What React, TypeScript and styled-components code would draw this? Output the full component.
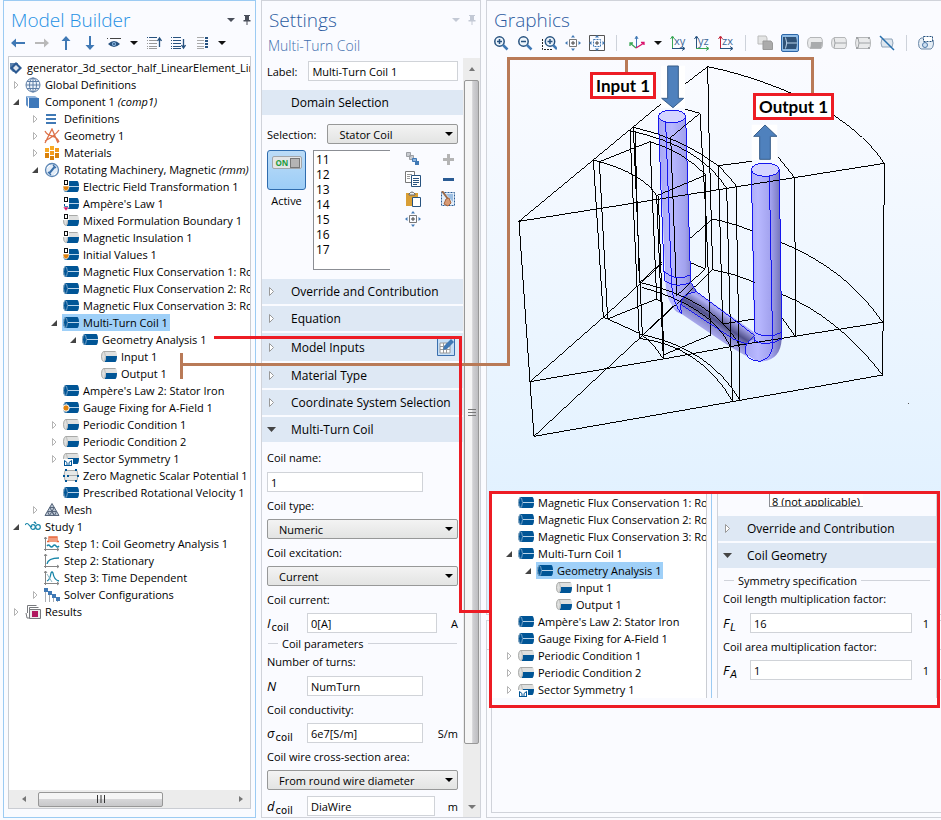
import React from "react";
import styled, { createGlobalStyle, css } from "styled-components";

const GlobalStyle = createGlobalStyle`
  *, *::before, *::after { box-sizing: border-box; }
  body {
    margin: 0;
    background: #fafbff;
    color: #000;
    font-family: "Open Sans", "Noto Sans", sans-serif;
    font-size: 11px;
    overflow: hidden;
  }
  button, input, select { font: inherit; color: inherit; margin: 0; }
  ul { list-style: none; margin: 0; padding: 0; }
`;

/* ---------- shell ---------- */

const Page = styled.div`
  position: relative;
  display: grid;
  grid-template-columns: 253px 220px minmax(0, 1fr);
  grid-template-rows: minmax(0, 1fr);
  gap: 5px;
  height: 100vh;
  padding: 0 0 2px 3px;
`;

const Panel = styled.section<{ $active?: boolean }>`
  display: flex;
  flex-direction: column;
  min-width: 0;
  min-height: 0;
  overflow: hidden;
  background: #fafbff;
  border: 1px solid ${(p) => (p.$active ? "#9ccbf3" : "#d0d3da")};
`;

const TitleBar = styled.header<{ $dim?: boolean }>`
  display: flex;
  flex: none;
  align-items: center;
  gap: 8px;
  height: 34px;
  padding: 4px 4px 0 7px;
  color: ${(p) => (p.$dim ? "#c3c9d5" : "#4a4f5a")};
`;

const Title = styled.h1<{ $color: string }>`
  flex: 1;
  margin: 0;
  font-size: 19px;
  font-weight: 300;
  line-height: 28px;
  white-space: nowrap;
  color: ${(p) => p.$color};
`;

const PlainButton = styled.button`
  display: flex;
  flex: none;
  align-items: center;
  justify-content: center;
  padding: 0;
  border: 0;
  background: none;
`;

const Toolbar = styled.div`
  display: flex;
  flex: none;
  align-items: center;
  gap: 8px;
  height: 16px;
  padding: 0 6px;
`;

/* ---------- icons ---------- */

const BLUE = "#4079b5";
const NAVY = "#27527f";

const Svg = ({ size = 16, width, children }: { size?: number; width?: number; children: React.ReactNode }) => (
  <svg width={width ?? size} height={size} viewBox={`0 0 ${width ?? size} ${size}`} fill="none" aria-hidden="true">
    {children}
  </svg>
);

const Caret = ({ color = "#111" }: { color?: string }) => (
  <Svg size={8} width={8}>
    <path d="M0 2h8L4 6z" fill={color} />
  </Svg>
);

const Pin = () => (
  <Svg size={12} width={8}>
    <path d="M1 1h6v1H6v4h1.500v1.500H4.500V11h-1V7.500H.5V6H2V2H1z" fill="currentColor" />
  </Svg>
);

const Coil = () => (
  <>
    <path d="M2 2h12.500q1.500 1 1.500 5.500T14.500 13H2Q0 11 0 7.500T2 2z" fill="#005596" />
    <path d="M2.500 2.500Q.5 4 .5 7.500t2 5" stroke="#9db4c6" />
    <path d="M3.500 3Q5.500 7.500 3.500 12.500" stroke="#6f9dc4" />
    <path d="M5 7.500h11" stroke="#b9d4ea" />
  </>
);

const HalfCoil = () => (
  <>
    <path d="M2 2h12.500q1.500 1 1.500 5.500T14.500 13H2Q0 11 0 7.500T2 2z" fill="#dfe0df" />
    <path d="M5 7h11q0 4.500-1.500 6H3.500Q5 11 5 7z" fill="#005596" />
    <path d="M14.500 2.500h-12Q.5 4 .5 7.500t2 5" stroke="#a9aaa8" />
    <path d="M3.500 3Q5.500 7.500 3.500 12.500" stroke="#bdbdbb" />
  </>
);

const DMark = () => (
  <>
    <rect x="0" y="0" width="6" height="7" fill="#fff" />
    <rect x="1.500" y="1.500" width="3" height="4" stroke="#111" />
  </>
);

const treeIcons: Record<string, React.ReactNode> = {
  root: (
    <>
      <path d="M1 3h8v9H4L1 9z" fill="#5d83ae" />
      <path d="M7 2l6 6-6 6-6-6z" fill="#2c5a92" />
      <path d="M4 8l3-3 3 3-3 3z" fill="#fff" opacity=".85" />
    </>
  ),
  globe: (
    <g stroke="#5e7ea6">
      <circle cx="8" cy="8" r="7" fill="#eef4fb" />
      <ellipse cx="8" cy="8" rx="3.500" ry="7" />
      <path d="M1 8h14M8 1v14M2 4.500h12M2 11.500h12" />
    </g>
  ),
  component: (
    <>
      <path d="M1 2h9l3 2H4z" fill="#8fb2da" />
      <path d="M4 4h10v10H4z" fill="#3f79ba" />
      <path d="M1 2l2 2v9l-2-2z" fill="#5f8fc6" />
    </>
  ),
  lines: <path d="M2 4h10M2 8h10M2 12h10" stroke={BLUE} strokeWidth="2" />,
  geometry: (
    <path d="M1 3q2 4 7 5t7 6M1 15L8 1l6 14M15 2q-2 3-6 6t-8 5" stroke="#dd7148" strokeWidth="1.300" />
  ),
  materials: (
    <>
      <path d="M6 1h4v4H6zM1 3h4v4H1z" fill="#f7aa25" />
      <path d="M11 3h4v4h-4zM6 6h4v4H6z" fill="#f39b1d" />
      <path d="M1 8h4v5H1zM11 8h4v5h-4zM6 11h4v4H6z" fill="#d9810b" />
    </>
  ),
  magnetic: (
    <>
      <circle cx="8" cy="8" r="6.500" fill="#e2ecf7" stroke="#5c86b5" strokeWidth="1.300" />
      <path d="M5.500 11L10.500 5" stroke="#3a6ea8" strokeWidth="2" />
      <path d="M4 10l3 3M9 3l3 3" stroke="#3a6ea8" strokeWidth="1.300" />
      <path d="M3 6l3-3M10 13l3-3" stroke="#fff" />
    </>
  ),
  coil: <Coil />,
  half: <HalfCoil />,
  dhalf: (
    <>
      <HalfCoil />
      <DMark />
    </>
  ),
  dorange: (
    <>
      <Coil />
      <DMark />
      <path d="M0 7h6v1q0 3-3 4Q0 11 0 8z" fill="#e0820e" stroke="#fff" strokeWidth=".6" />
    </>
  ),
  dpink: (
    <>
      <Coil />
      <DMark />
      <path d="M0 7h6v4H0z" fill="#fff" />
      <path d="M1.500 8v2.500H5" stroke="#005596" />
      <path d="M0 11h6l-3 4z" fill="#d9126c" stroke="#fff" strokeWidth=".6" />
    </>
  ),
  gauge: (
    <>
      <Coil />
      <circle cx="3" cy="8" r="3.200" fill="#e0820e" stroke="#fff" />
    </>
  ),
  sector: (
    <>
      <HalfCoil />
      <path d="M0 8h10v8H0z" fill="#fff" />
      <path d="M1.500 14.500v-5l2.500 2v3zM8.500 14.500v-5l-2.500 2v3z" stroke="#005596" />
      <path d="M1 14.500h8" stroke="#005596" />
    </>
  ),
  zero: (
    <>
      <path d="M2 2.500h12q2 5 0 10H2q-2-5 0-10z" fill="#e6e8e8" stroke="#a9abab" />
      <path d="M4 7.500h11" stroke="#a9abab" />
      <path d="M2 1h2v2H2zM12 1h2v2h-2zM2 12h2v2H2zM12 12h2v2h-2zM0 7h2v2H0zM4 7h2v2H4zM14 7h2v2h-2z" fill="#005596" />
    </>
  ),
  mesh: (
    <>
      <path d="M8 1.500L15 13.500H1z" fill="#b9c4d2" stroke="#56657a" />
      <path d="M5.700 5.500h4.600L5.500 13.500 3.500 9.500h9l-2 4zM8 9.500l2 4" stroke="#56657a" />
    </>
  ),
  study: (
    <g stroke="#1785a8" strokeWidth="1.200">
      <path d="M0 6q2-3 4 0t3 1" />
      <circle cx="8" cy="8" r="2.300" />
      <circle cx="13" cy="8" r="2.300" />
      <path d="M9 4q1-2 2 1" />
    </g>
  ),
  stepcoil: (
    <>
      <path d="M1.500 1v14M0 13.500h15M13 12l2 1.500L13 15M0 3l1.500-2L3 3" stroke="#858585" />
      <path d="M3 5.500h2V1h8v4.500h2M7 1v5M9 1v5M11 1v5" stroke="#e8673a" strokeWidth="1.300" />
      <path d="M3 10q1.500-2 3 0t3 0 3 0 3 0" stroke="#1785a8" strokeWidth="1.300" />
    </>
  ),
  stationary: (
    <>
      <path d="M1.500 1v14M0 13.500h15M13 12l2 1.500L13 15M0 3l1.500-2L3 3" stroke="#858585" />
      <path d="M3 11q1-6 12-6" stroke="#1785a8" strokeWidth="1.300" />
    </>
  ),
  time: (
    <>
      <path d="M1.500 1v14M0 13.500h15M13 12l2 1.500L13 15M0 3l1.500-2L3 3" stroke="#858585" />
      <path d="M3 11q3-1 4-8 1-2 2 0 1 7 6 8" stroke="#1785a8" strokeWidth="1.300" />
      <path d="M3 4l5 8" stroke="#8fb9c6" />
    </>
  ),
  solver: (
    <>
      <path d="M1.500 4v11M5.500 6v9M9.500 9v6M13.500 12v3" stroke="#a9adb3" />
      <path d="M0 1h4v4H0zM4 4h4v4H4zM8 7h4v4H8zM12 10h4v4h-4z" fill={BLUE} />
    </>
  ),
  results: (
    <>
      <path d="M2.500 9V1.500h9M4.500 9V3.500h9M1 9l1 5h4" stroke="#77797d" />
      <path d="M4.500 5.500h11v9h-11z" fill="#ececec" stroke="#77797d" />
      <path d="M7 7h6v6H7z" fill="#b0175e" />
    </>
  ),
};

const Arrow = ({ rotate = 0, color = BLUE }: { rotate?: number; color?: string }) => (
  <Svg>
    <path d="M1 8l5-4.500v3.500h9v2H6v3.500z" fill={color} transform={`rotate(${rotate} 8 8)`} />
  </Svg>
);

/* ---------- tree ---------- */

interface TreeItem {
  icon: string;
  label: string;
  note?: string;
  level: number;
  open?: boolean;
  selected?: boolean;
}

const TreeFrame = styled.div`
  display: flex;
  flex: 1;
  flex-direction: column;
  min-height: 0;
  margin: 5px 4px 8px;
  border: 1px solid #cacdd3;
  background: #fff;
`;

const TreeList = styled.ul<{ $top: number }>`
  flex: 1;
  min-width: 0;
  min-height: 0;
  padding-top: ${(p) => p.$top}px;
  overflow: hidden;
`;

const TreeRow = styled.li<{ $indent: number }>`
  display: flex;
  align-items: center;
  height: 17px;
  padding-left: ${(p) => p.$indent}px;
  white-space: nowrap;
`;

const Twisty = styled.span<{ $wide: boolean }>`
  display: flex;
  flex: none;
  width: ${(p) => (p.$wide ? 12 : 0)}px;
`;

const Node = styled.span<{ $selected?: boolean; $tight?: boolean }>`
  display: flex;
  flex: none;
  align-items: center;
  gap: ${(p) => (p.$tight ? 2 : 4)}px;
  height: 17px;
  padding: 0 2px 0 ${(p) => (p.$tight ? 0 : 1)}px;
  background: ${(p) => (p.$selected ? "#9fd0f8" : "transparent")};
`;

const Tree = ({ items, label, base = 16, top = 2 }: { items: TreeItem[]; label: string; base?: number; top?: number }) => (
  <TreeList aria-label={label} $top={top}>
    {items.map((item, i) => (
      <TreeRow key={i} $indent={Math.max(0, item.level * 19 - base)}>
        <Twisty $wide={item.level > 0}>
          {item.open !== undefined && (
            <Svg size={8}>
              {item.open ? (
                <path d="M7 1v6H1z" fill="#444" />
              ) : (
                <path d="M2.500 .5v7l3.500-3.500z" stroke="#b4b4b4" />
              )}
            </Svg>
          )}
        </Twisty>
        <Node $selected={item.selected} $tight={item.level === 0}>
          <Svg>{treeIcons[item.icon]}</Svg>
          <span>
            {item.label}
            {item.note && <i> {item.note}</i>}
          </span>
        </Node>
      </TreeRow>
    ))}
  </TreeList>
);

const modelItems: TreeItem[] = [
  { icon: "root", label: "generator_3d_sector_half_LinearElement_Linear.mph", level: 0 },
  { icon: "globe", label: "Global Definitions", level: 1, open: false },
  { icon: "component", label: "Component 1", note: "(comp1)", level: 1, open: true },
  { icon: "lines", label: "Definitions", level: 2, open: false },
  { icon: "geometry", label: "Geometry 1", level: 2, open: false },
  { icon: "materials", label: "Materials", level: 2, open: false },
  { icon: "magnetic", label: "Rotating Machinery, Magnetic", note: "(rmm)", level: 2, open: true },
  { icon: "dorange", label: "Electric Field Transformation 1", level: 3 },
  { icon: "dpink", label: "Ampère's Law 1", level: 3 },
  { icon: "dhalf", label: "Mixed Formulation Boundary 1", level: 3 },
  { icon: "dhalf", label: "Magnetic Insulation 1", level: 3 },
  { icon: "dorange", label: "Initial Values 1", level: 3 },
  { icon: "coil", label: "Magnetic Flux Conservation 1: Rotor", level: 3 },
  { icon: "coil", label: "Magnetic Flux Conservation 2: Rotor", level: 3 },
  { icon: "coil", label: "Magnetic Flux Conservation 3: Rotor", level: 3 },
  { icon: "coil", label: "Multi-Turn Coil 1", level: 3, open: true, selected: true },
  { icon: "coil", label: "Geometry Analysis 1", level: 4, open: true },
  { icon: "half", label: "Input 1", level: 5 },
  { icon: "half", label: "Output 1", level: 5 },
  { icon: "coil", label: "Ampère's Law 2: Stator Iron", level: 3 },
  { icon: "gauge", label: "Gauge Fixing for A-Field 1", level: 3 },
  { icon: "half", label: "Periodic Condition 1", level: 3, open: false },
  { icon: "half", label: "Periodic Condition 2", level: 3, open: false },
  { icon: "sector", label: "Sector Symmetry 1", level: 3, open: false },
  { icon: "zero", label: "Zero Magnetic Scalar Potential 1", level: 3 },
  { icon: "coil", label: "Prescribed Rotational Velocity 1", level: 3 },
  { icon: "mesh", label: "Mesh", level: 2, open: false },
  { icon: "study", label: "Study 1", level: 1, open: true },
  { icon: "stepcoil", label: "Step 1: Coil Geometry Analysis 1", level: 2 },
  { icon: "stationary", label: "Step 2: Stationary", level: 2 },
  { icon: "time", label: "Step 3: Time Dependent", level: 2 },
  { icon: "solver", label: "Solver Configurations", level: 2, open: false },
  { icon: "results", label: "Results", level: 1, open: false },
];

const insetItems: TreeItem[] = [
  { icon: "coil", label: "Magnetic Flux Conservation 1: Rotor", level: 1 },
  { icon: "coil", label: "Magnetic Flux Conservation 2: Rotor", level: 1 },
  { icon: "coil", label: "Magnetic Flux Conservation 3: Rotor", level: 1 },
  { icon: "coil", label: "Multi-Turn Coil 1", level: 1, open: true },
  { icon: "coil", label: "Geometry Analysis 1", level: 2, open: true, selected: true },
  { icon: "half", label: "Input 1", level: 3 },
  { icon: "half", label: "Output 1", level: 3 },
  { icon: "coil", label: "Ampère's Law 2: Stator Iron", level: 1 },
  { icon: "coil", label: "Gauge Fixing for A-Field 1", level: 1 },
  { icon: "half", label: "Periodic Condition 1", level: 1, open: false },
  { icon: "half", label: "Periodic Condition 2", level: 1, open: false },
  { icon: "sector", label: "Sector Symmetry 1", level: 1, open: false },
];

/* ---------- scroll bars ---------- */

const HScroll = styled.div`
  display: grid;
  grid-template-columns: 29px 52% 1fr 18px;
  flex: none;
  align-items: center;
  height: 18px;
  padding: 1px 0;
  background: #ececec;
`;

const VScroll = styled.div`
  display: grid;
  flex: none;
  grid-template-rows: 22px minmax(0, 664fr) minmax(0, 53fr) 20px;
  justify-items: center;
  width: 17px;
  background: #ececec;
`;

const thumb = css`
  display: flex;
  align-items: center;
  justify-content: center;
  border: 1px solid #979797;
  border-radius: 2px;
`;

const HThumb = styled.div`
  ${thumb}
  height: 15px;
  background: linear-gradient(#f5f5f5 50%, #d6d6d8 50%, #c8c8ca);
`;

const VThumb = styled.div`
  ${thumb}
  width: 15px;
  height: 100%;
  background: linear-gradient(90deg, #f5f5f5 50%, #d0d0d3 60%, #bdbdc0);
`;

/* ---------- forms ---------- */

const SettingsScroll = styled.div`
  display: flex;
  flex: 1;
  min-height: 0;
  margin-top: -1px;
`;

const SettingsBody = styled.div`
  flex: 1;
  min-width: 0;
  overflow: hidden;
`;

const Subtitle = styled.h2`
  flex: none;
  height: 24px;
  margin: 0;
  padding-left: 6px;
  font-size: 14px;
  font-weight: 300;
  line-height: 22px;
  color: #3e6fae;
`;

const Row = styled.div<{ $top?: number; $gap?: number }>`
  display: flex;
  align-items: center;
  gap: ${(p) => p.$gap ?? 0}px;
  padding: ${(p) => p.$top ?? 0}px 5px 0;
`;

const NarrowRow = styled(Row)`
  padding-right: 40px;
`;

const Text = styled.input`
  display: block;
  flex: 1;
  min-width: 0;
  height: 20px;
  padding: 0 3px;
  border: 1px solid #d0d3d8;
  border-radius: 0;
  outline: 0;
  background: #fff;
`;

const Caption = styled.label`
  display: block;
  white-space: nowrap;
`;

const FieldLabel = styled.label<{ $height?: number; $bottom?: number }>`
  display: block;
  height: ${(p) => p.$height ?? 27}px;
  padding-left: 5px;
  margin-bottom: ${(p) => p.$bottom ?? 0}px;
  line-height: ${(p) => p.$height ?? 27}px;
  white-space: nowrap;
`;

const SelectWrap = styled.span`
  position: relative;
  display: flex;
  flex: 1;
  min-width: 0;
  &::after {
    content: "";
    position: absolute;
    right: 5px;
    top: 8px;
    border: 4px solid transparent;
    border-top-color: #000;
    border-bottom: 0;
    pointer-events: none;
  }
`;

const Select = styled.select`
  width: 100%;
  height: 20px;
  padding: 0 16px 0 11px;
  appearance: none;
  border: 1px solid #979898;
  border-radius: 2px;
  background: linear-gradient(#f3f3f3, #e3e4e3);
`;

const SectionHead = styled.button<{ $height?: number }>`
  display: flex;
  align-items: center;
  gap: 15px;
  width: 100%;
  height: ${(p) => p.$height ?? 25}px;
  margin-bottom: 2px;
  padding: 0 8px 0 5px;
  border: 0;
  background: #dee8f4;
  font-size: 12px;
  text-align: left;
  white-space: nowrap;
`;

const HeadText = styled.span`
  flex: 1;
  overflow: hidden;
`;

const Section = ({ title, state, height, extra }: { title: string; state?: "open" | "closed"; height?: number; extra?: React.ReactNode }) => (
  <SectionHead type="button" $height={height} aria-expanded={state === "open"}>
    <Svg size={9}>
      {state === "open" && <path d="M0 2h9L4.500 7z" fill="#444" />}
      {state === "closed" && <path d="M2.500 .5v8l4-4z" fill="#fff" stroke="#999" />}
    </Svg>
    <HeadText>{title}</HeadText>
    {extra}
  </SectionHead>
);

const Symbol = styled.label<{ $width: number }>`
  flex: none;
  width: ${(p) => p.$width}px;
  height: 18px;
  font-family: "Open Sans", "DejaVu Sans", sans-serif;
  font-size: 13px;
  font-style: italic;
  line-height: 18px;
  white-space: nowrap;
`;

const Sub = styled.span<{ $italic?: boolean }>`
  padding-left: 1px;
  font-family: "DejaVu Sans", sans-serif;
  font-size: 10px;
  font-style: ${(p) => (p.$italic ? "italic" : "normal")};
  line-height: 0;
  vertical-align: -3px;
`;

const Unit = styled.span<{ $width: number }>`
  flex: none;
  width: ${(p) => p.$width}px;
  text-align: right;
`;

const Legend = styled.div`
  display: flex;
  align-items: center;
  gap: 4px;
  height: 20px;
  padding: 0 6px;
  white-space: nowrap;
  &::before, &::after {
    content: "";
    width: 10px;
    height: 1px;
    background: #d0d3da;
  }
  &::after { flex: 1; }
`;

const SelectionArea = styled.div`
  display: grid;
  grid-template-columns: 39px 77px 1fr;
  gap: 7px;
  height: 135px;
  padding: 6px 5px 0;
`;

const ActiveToggle = styled.button`
  display: flex;
  justify-content: center;
  width: 39px;
  height: 40px;
  padding: 5px 0 0;
  border: 1px solid #2f6cae;
  border-radius: 3px;
  background: linear-gradient(#bcdcf7, #9ccdf7);
`;

const Knob = styled.span`
  display: flex;
  align-items: center;
  justify-content: space-between;
  width: 30px;
  height: 13px;
  padding: 0 1px 0 3px;
  border: 1px solid #a2a6aa;
  border-radius: 2px;
  background: #e3e5e6;
  color: #1e9a3d;
  font-size: 8px;
  font-weight: 700;
  &::after {
    content: "";
    width: 10px;
    height: 10px;
    border: 1px solid #777;
    background: #b4b4b4;
  }
`;

const ActiveText = styled.div`
  padding-top: 3px;
  text-align: center;
`;

const DomainList = styled.ul`
  height: 120px;
  padding: 1px 2px;
  border: 1px solid #8b8e94;
  border-right: 0;
  background: #fff;
  font-size: 12px;
  line-height: 15px;
`;

const Tools = styled.div`
  display: grid;
  grid-template-columns: 16px 16px;
  grid-auto-rows: 16px;
  gap: 4px 19px;
  align-content: start;
  justify-content: end;
  padding: 1px 2px 0 0;
`;

const CopyIcon = () => (
  <Svg>
    <path d="M.5.5h9v11h-9z" fill="#fff" stroke="#777" />
    <path d="M2 3.500h5M2 5.500h3M2 7.500h3" stroke="#999" />
    <path d="M6.500 4.500h9v11h-9z" fill="#fff" stroke={NAVY} />
    <path d="M8 7.500h6M8 9.500h6M8 11.500h6M8 13.500h4" stroke={NAVY} />
  </Svg>
);

const Target = ({ framed }: { framed?: boolean }) => (
  <Svg>
    {framed && <path d="M.5.5h15v15H.5z" stroke="#555" />}
    <path d="M4.500 4.500h7v7h-7z" stroke={framed ? BLUE : "#777"} strokeDasharray={framed ? "2 1" : undefined} />
    <path d="M8 6v4M6 8h4" stroke="#444" />
    <path d="M8 0l2 2.500H6zM8 16l2-2.500H6zM0 8l2.500-2v4zM16 8l-2.500-2v4z" fill={BLUE} />
  </Svg>
);

const SettingsPanel = () => (
  <Panel>
    <TitleBar $dim>
      <Title $color="#2c5c9f">Settings</Title>
      <PlainButton aria-label="Panel menu"><Caret color="currentColor" /></PlainButton>
      <PlainButton aria-label="Pin panel"><Pin /></PlainButton>
    </TitleBar>
    <Subtitle>Multi-Turn Coil</Subtitle>
    <SettingsScroll>
      <SettingsBody>
        <Row $top={3} $gap={11}>
          <Caption htmlFor="lbl">Label:</Caption>
          <Text id="lbl" defaultValue="Multi-Turn Coil 1" />
        </Row>
        <Row $top={9} />
        <Section title="Domain Selection" />
        <Row $top={7} $gap={11}>
          <Caption htmlFor="sel">Selection:</Caption>
          <SelectWrap>
            <Select id="sel"><option>Stator Coil</option></Select>
          </SelectWrap>
        </Row>
        <SelectionArea>
          <div>
            <ActiveToggle aria-label="Active" aria-pressed="true"><Knob>ON</Knob></ActiveToggle>
            <ActiveText>Active</ActiveText>
          </div>
          <DomainList>
            {[11, 12, 13, 14, 15, 16, 17].map((n) => <li key={n}>{n}</li>)}
          </DomainList>
          <Tools>
            <PlainButton aria-label="Create selection">
              <Svg>
                <path d="M1.500 1.500h4v4h-4zM4.500 4.500h4v4h-4z" fill="#c8cbd0" stroke="#9c9fa4" />
                <path d="M7.500 7.500h4v3h-4z" fill="#8db3de" stroke={BLUE} />
                <path d="M10 10h4v4h-4z" fill={BLUE} />
              </Svg>
            </PlainButton>
            <PlainButton aria-label="Add"><Svg><path d="M8.500 3v11M3 8.500h11" stroke="#b4b4b4" strokeWidth="3" /></Svg></PlainButton>
            <PlainButton aria-label="Copy selection"><CopyIcon /></PlainButton>
            <PlainButton aria-label="Remove"><Svg><path d="M3 8.500h11" stroke="#2a5b94" strokeWidth="3" /></Svg></PlainButton>
            <PlainButton aria-label="Paste selection">
              <Svg>
                <path d="M1 2h12v13H1z" fill="#d99f36" />
                <path d="M4 3q3-4 6 0v1H4z" fill="#eee" stroke="#666" />
                <path d="M7.500 6.500h8v9h-8z" fill="#fff" stroke={NAVY} />
              </Svg>
            </PlainButton>
            <PlainButton aria-label="Clear selection">
              <Svg>
                <path d="M1.500 1.500h13v13h-13z" fill="#e2eefa" stroke="#2a5b94" strokeDasharray="2 1" />
                <path d="M6 3h7v8z" fill="#9dbfe3" />
                <path d="M2 0l6 8" stroke="#9a6a4a" strokeWidth="2" />
                <path d="M6 8l3-1 2 5-3 3-4-2z" fill="#d99a74" stroke="#a5653f" />
              </Svg>
            </PlainButton>
            <PlainButton aria-label="Zoom to selection"><Target /></PlainButton>
          </Tools>
        </SelectionArea>
        <Section title="Override and Contribution" state="closed" />
        <Section title="Equation" state="closed" />
        <Section
          title="Model Inputs"
          state="closed"
          height={28}
          extra={
            <Svg size={18}>
              <path d="M.5.5h17v17H.5z" fill="#c5def6" stroke="#3a6fae" />
              <path d="M3 5h10v10H3z" fill="#fff" />
              <path d="M3 8.500h10M3 11.500h10M6.500 5v10M9.500 5v10M3 5h10v10H3z" stroke="#9a9a9a" />
              <path d="M6 12l1-4 7-7 3 3-7 7z" fill={BLUE} />
            </Svg>
          }
        />
        <Section title="Material Type" state="closed" />
        <Section title="Coordinate System Selection" state="closed" />
        <Section title="Multi-Turn Coil" state="open" />
        <FieldLabel htmlFor="name" $height={28}>Coil name:</FieldLabel>
        <NarrowRow><Text id="name" defaultValue="1" /></NarrowRow>
        <FieldLabel htmlFor="type">Coil type:</FieldLabel>
        <Row><SelectWrap><Select id="type"><option>Numeric</option></Select></SelectWrap></Row>
        <FieldLabel htmlFor="exc">Coil excitation:</FieldLabel>
        <Row><SelectWrap><Select id="exc"><option>Current</option></Select></SelectWrap></Row>
        <FieldLabel htmlFor="cur">Coil current:</FieldLabel>
        <Row>
          <Symbol $width={40} htmlFor="cur">I<Sub>coil</Sub></Symbol>
          <Text id="cur" defaultValue="0[A]" />
          <Unit $width={21}>A</Unit>
        </Row>
        <Legend>Coil parameters</Legend>
        <FieldLabel htmlFor="turns" $height={18} $bottom={5}>Number of turns:</FieldLabel>
        <NarrowRow>
          <Symbol $width={40} htmlFor="turns">N</Symbol>
          <Text id="turns" defaultValue="NumTurn" />
        </NarrowRow>
        <FieldLabel htmlFor="sigma">Coil conductivity:</FieldLabel>
        <Row>
          <Symbol $width={40} htmlFor="sigma">σ<Sub>coil</Sub></Symbol>
          <Text id="sigma" defaultValue="6e7[S/m]" />
          <Unit $width={35}>S/m</Unit>
        </Row>
        <FieldLabel htmlFor="area">Coil wire cross-section area:</FieldLabel>
        <Row><SelectWrap><Select id="area"><option>From round wire diameter</option></Select></SelectWrap></Row>
        <Row $top={6}>
          <Symbol $width={40} htmlFor="dia">d<Sub>coil</Sub></Symbol>
          <Text id="dia" defaultValue="DiaWire" />
          <Unit $width={23}>m</Unit>
        </Row>
      </SettingsBody>
      <VScroll>
        <PlainButton aria-label="Scroll up"><Svg size={8}><path d="M1 6h6L4 2z" fill="#777" /></Svg></PlainButton>
        <VThumb><Svg size={8}><path d="M0 1.500h8M0 4.500h8M0 7.500h8" stroke="#777" /></Svg></VThumb>
        <span />
        <PlainButton aria-label="Scroll down"><Caret color="#777" /></PlainButton>
      </VScroll>
    </SettingsScroll>
  </Panel>
);

/* ---------- graphics ---------- */

const Column = styled.div`
  position: relative;
  display: grid;
  grid-template-rows: 615px minmax(0, 1fr);
  gap: 5px;
  min-width: 0;
  min-height: 0;
`;

const GraphicsFrame = styled(Panel)`
  border-right: 0;
`;

const Canvas = styled.div`
  flex: 1;
  min-height: 0;
  margin: 6px 0 4px;
  overflow: hidden;
  background: linear-gradient(#fafbff, #dcefff);
`;

const Divider = styled.span`
  flex: none;
  width: 1px;
  height: 16px;
  margin: 0 3px;
  background: #cdd2da;
`;

const MessagesHead = styled.div`
  flex: none;
  height: 29px;
  border-bottom: 1px solid #d0d3da;
`;

const MessagesTools = styled.div`
  flex: none;
  height: 29px;
`;

const MessagesBody = styled.div`
  flex: 1;
  margin: 0 0 4px 4px;
  border: 1px solid #d0d3da;
  border-right: 0;
`;

const Lens = ({ minus, box }: { minus?: boolean; box?: boolean }) => (
  <Svg>
    {box && <path d="M1.500 4v10.500H12" stroke="#222" strokeDasharray="2 1" />}
    <circle cx={box ? 9 : 6.500} cy="6.500" r="4.700" stroke={NAVY} strokeWidth="1.500" fill="#eef5fc" />
    <path d={box ? "M12 10l4 4" : "M10 10l4.500 4.500"} stroke={BLUE} strokeWidth="2.500" />
    <path d={box ? "M6.500 6.500h5M9 4v5" : minus ? "M4 6.500h5" : "M4 6.500h5M6.500 4v5"} stroke={NAVY} strokeWidth="1.500" />
  </Svg>
);

const PlaneText = styled.text`
  font-size: 11px;
  fill: #3e6897;
`;

const Plane = ({ text, v, h }: { text: string; v: string; h: string }) => (
  <Svg>
    <path d="M2.500 14V2M.5 4l2-3 2 3" stroke={v} />
    <path d="M2 13.500h12M12 11.500l3 2-3 2" stroke={h} />
    <PlaneText x="4" y="10">{text}</PlaneText>
  </Svg>
);

const Tube = ({ fill, mid, dots }: { fill: string; mid?: boolean; dots?: boolean }) => (
  <Svg>
    <path d="M3 2.500h11q1.500 1 1.500 5.500T14 13.500H3Q.5 12.500.5 8T3 2.500z" fill="#e9eaeb" stroke="#b4b6b8" />
    <path d="M4 7h11q0 4-1 6H3q1-2 1-6z" fill={fill} />
    {mid && <path d="M4 8h11" stroke="#a0a3a6" />}
    {mid && <path d="M3 3q2 5 0 10" stroke="#a0a3a6" />}
    {dots && <path d="M1 2h2v2H1zM13 2h2v2h-2zM1 12h2v2H1zM13 12h2v2h-2z" fill="#a0a3a6" />}
  </Svg>
);

const ActiveTool = styled(PlainButton)`
  width: 18px;
  height: 18px;
  border: 1px solid #2c66a8;
  border-radius: 2px;
  background: #8fbce6;
`;

const wire = [
  "M57 517L90 998 102 1162 720 1054 1148 978 1153 343 57 517",
  "M57 517L483 165M555 105L623 53 628 300 638 662",
  "M623 53C720 72 830 110 930 158Q1080 235 1153 343",
  "M90 998L490 930 720 888 1148 820M90 998L310 805 485 645M570 568L638 510",
  "M102 1162L430 857 530 765 638 662",
  "M638 510Q690 520 755 545M843 580Q1040 660 1148 820",
  "M638 662Q700 672 765 700M843 735Q1010 800 1148 978",
  "M280 332L310 805 323 810 298 338 280 332M298 338L450 278 470 750 323 810",
  "M298 338Q430 375 470 440L490 930M475 440L492 930M470 440L618 378",
  "M450 278Q550 308 618 378L615 660 570 640M485 640L420 700",
  "M323 810L418 853Q460 880 490 930M490 918L632 858",
  "M390 245L418 868M400 235L427 857M405 245L418 700",
  "M400 235Q540 265 655 350 690 385 708 410L720 1054",
  "M390 245Q600 290 680 418L697 1055",
  "M418 700Q640 750 720 890M425 715Q630 770 690 890",
  "M418 868Q600 890 697 1055M427 857Q630 900 720 1054",
  "M555 180L600 193 618 500 632 858M600 193L512 265 530 740 615 660",
  "M755 337L655 350 668 825 765 810M835 325L883 385 888 865 845 805",
  "M470 750L485 760M430 857L520 770",
];

const Scene = () => (
  <svg width="454" height="553" viewBox="0 0 454 553" role="img" aria-label="Coil geometry">
    <defs>
      <linearGradient id="tube">
        <stop offset="0" stopColor="#a6a6f2" />
        <stop offset=".35" stopColor="#b8b8ff" />
        <stop offset=".7" stopColor="#a2a2ee" />
        <stop offset="1" stopColor="#6f6fb4" />
      </linearGradient>
      <linearGradient id="cross" gradientUnits="userSpaceOnUse" x1="680" y1="775" x2="625" y2="860">
        <stop offset="0" stopColor="#8f8fd8" />
        <stop offset=".2" stopColor="#b0b0f4" />
        <stop offset=".5" stopColor="#50508a" />
        <stop offset=".68" stopColor="#8b8bcc" />
        <stop offset="1" stopColor="#b4b4fa" />
      </linearGradient>
    </defs>
    <g transform="translate(13 -8) scale(.33333)" fill="none" strokeWidth="3">
      <path d="M515 745Q530 705 585 725L770 855 740 922 690 893 545 795Q510 785 515 745z" fill="url(#cross)" />
      <path d="M475 205L497 705Q498 765 545 795L540 760 560 730 590 726 572 700 557 205z" fill="url(#tube)" />
      <path d="M754 365L763 870Q725 880 740 915 765 940 790 937 842 930 845 870L838 365z" fill="url(#tube)" />
      <g shapeRendering="crispEdges">
        <path d={wire.join("")} stroke="#000" />
        <g stroke="#1616ee">
          <ellipse cx="516" cy="202" rx="41" ry="19" fill="#d4d4ff" />
          <ellipse cx="796" cy="362" rx="42" ry="20" fill="#d4d4ff" />
          <path d="M475 202L493 695M497 220L515 710M557 202L572 700" />
          <path d="M493 668Q530 700 570 678M493 695Q530 720 572 700M515 710Q520 765 545 795M572 700L590 728 765 860M545 795Q530 735 590 728M540 765L700 870 740 885" />
          <path d="M754 362L764 850M808 380L818 885M838 362L845 870M764 850Q800 872 845 850M764 875Q800 895 845 870M735 895Q770 840 764 880M737 895Q730 935 782 937M818 885Q818 925 782 937" />
        </g>
      </g>
      <path d="M483 50h72v126h-72z" fill="#fff" />
      <path d="M503 51h32v97h16l-32 28-34-28h18z" fill="#4f81bd" stroke="#385d8a" />
      <path d="M755 227h77v106h-77z" fill="#fff" />
      <path d="M795 228l36 34h-20v69h-32v-69h-18z" fill="#4f81bd" stroke="#385d8a" />
      <path d="M1224 1062h3v3h-3z" fill="#555" />
    </g>
  </svg>
);

const GraphicsPanel = () => (
  <GraphicsFrame>
    <TitleBar><Title $color="#2c5c9f">Graphics</Title></TitleBar>
    <Toolbar>
      <PlainButton aria-label="Zoom in"><Lens /></PlainButton>
      <PlainButton aria-label="Zoom out"><Lens minus /></PlainButton>
      <PlainButton aria-label="Zoom box"><Lens box /></PlainButton>
      <PlainButton aria-label="Zoom selected"><Target /></PlainButton>
      <PlainButton aria-label="Zoom extents"><Target framed /></PlainButton>
      <Divider />
      <PlainButton aria-label="Default view">
        <Svg width={18}>
          <path d="M8.500 13V2M7 4l1.500-3L10 4" stroke={BLUE} />
          <path d="M8 13L2 8M2 11V8h3" stroke="#3aa655" strokeWidth="1.300" />
          <path d="M8 13l8-5M13 7.500h3V10" stroke="#d9126c" strokeWidth="1.300" />
        </Svg>
      </PlainButton>
      <PlainButton aria-label="View menu"><Caret /></PlainButton>
      <PlainButton aria-label="View xy plane"><Plane text="xy" v="#3aa655" h={NAVY} /></PlainButton>
      <PlainButton aria-label="View yz plane"><Plane text="yz" v={NAVY} h="#3aa655" /></PlainButton>
      <PlainButton aria-label="View zx plane"><Plane text="zx" v="#c32136" h={NAVY} /></PlainButton>
      <Divider />
      <PlainButton aria-label="Select objects">
        <Svg>
          <path d="M1 1h8l1 2v6H1z" fill="#e3e4e4" stroke="#bbb" />
          <path d="M6 6h8l1.500 2v6.500H6z" fill="#ababab" stroke="#999" />
        </Svg>
      </PlainButton>
      <ActiveTool aria-label="Select domains">
        <Svg>
          <path d="M1 2h13q2 6 0 12H1z" fill="#2f5277" />
          <path d="M3.500 2.500q2.500 5.500 0 11M4 8h11" stroke="#b8d2ea" />
        </Svg>
      </ActiveTool>
      <PlainButton aria-label="Select boundaries"><Tube fill="#a9abad" /></PlainButton>
      <PlainButton aria-label="Select edges"><Tube fill="none" mid /></PlainButton>
      <PlainButton aria-label="Select points"><Tube fill="none" mid dots /></PlainButton>
      <PlainButton aria-label="Hide selection">
        <Svg>
          <path d="M3 4h10q2 4 0 8H3q-2-4 0-8z" fill="#dfe7ef" stroke="#8fa3b8" />
          <path d="M1 1l14 14" stroke="#2870ad" strokeWidth="1.500" />
        </Svg>
      </PlainButton>
      <Divider />
      <PlainButton aria-label="Snapshot">
        <Svg>
          <path d="M3 3h10q3 1 2.500 6-.5 4-2.500 5H3Q.5 13 .5 8.500T3 3z" fill="#e5edf5" stroke="#6c89a8" />
          <path d="M5.500 1.500h9v5h-9z" fill="#fff" stroke={NAVY} strokeDasharray="2 1" />
          <circle cx="7" cy="10" r="2.500" fill="#cfe0f1" stroke="#4d79a8" />
        </Svg>
      </PlainButton>
    </Toolbar>
    <Canvas><Scene /></Canvas>
  </GraphicsFrame>
);

/* ---------- inset ---------- */

const InsetFrame = styled.aside`
  position: absolute;
  top: 491px;
  right: 1px;
  left: 3px;
  display: grid;
  grid-template-columns: 215px 5px minmax(0, 1fr);
  height: 217px;
  padding-bottom: 7px;
  border: 3px solid #ed1c24;
  background: #fafbff;
`;

const InsetTree = styled.div`
  overflow: hidden;
  border-right: 1px solid #cacdd3;
  background: #fff;
`;

const InsetGutter = styled.div`
  border-right: 1px solid #9ccbf3;
`;

const InsetSettings = styled.div`
  margin-left: 5px;
  border-left: 1px solid #d0d3da;
  border-right: 1px solid #d0d3da;
`;

const InsetList = styled.div`
  width: 94px;
  height: 13px;
  margin: 0 0 9px 51px;
  padding-left: 2px;
  overflow: hidden;
  border: solid #8b8e94;
  border-width: 0 0 1px 1px;
  background: #fff;
  line-height: 16px;
  white-space: nowrap;
`;

const InsetFieldRow = styled(Row)`
  padding-right: 7px;
`;

const Inset = () => (
  <InsetFrame>
    <InsetTree><Tree items={insetItems} label="Geometry analysis nodes" base={6} top={0} /></InsetTree>
    <InsetGutter />
    <InsetSettings>
      <InsetList>8 (not applicable)</InsetList>
      <Section title="Override and Contribution" state="closed" />
      <Section title="Coil Geometry" state="open" />
      <Legend>Symmetry specification</Legend>
      <FieldLabel htmlFor="fl" $height={18} $bottom={5}>Coil length multiplication factor:</FieldLabel>
      <InsetFieldRow>
        <Symbol $width={27} htmlFor="fl">F<Sub $italic>L</Sub></Symbol>
        <Text id="fl" defaultValue="16" />
        <Unit $width={17}>1</Unit>
      </InsetFieldRow>
      <FieldLabel htmlFor="fa">Coil area multiplication factor:</FieldLabel>
      <InsetFieldRow>
        <Symbol $width={27} htmlFor="fa">F<Sub $italic>A</Sub></Symbol>
        <Text id="fa" defaultValue="1" />
        <Unit $width={17}>1</Unit>
      </InsetFieldRow>
    </InsetSettings>
  </InsetFrame>
);

/* ---------- callouts ---------- */

const Connectors = styled.svg`
  position: absolute;
  inset: 0;
  width: 100%;
  height: 100%;
  pointer-events: none;
`;

const Callout = styled.div<{ $left: number; $top: number }>`
  position: absolute;
  left: ${(p) => p.$left}px;
  top: ${(p) => p.$top}px;
  padding: 0 3px;
  border: 3px solid #ed1c24;
  background: #fff;
  font-family: Lato, "Open Sans", sans-serif;
  font-size: 17px;
  font-weight: 700;
  line-height: 21px;
  white-space: nowrap;
`;

const ModelBuilder = () => (
  <Panel $active>
    <TitleBar>
      <Title $color="#2490e4">Model Builder</Title>
      <PlainButton aria-label="Panel menu"><Caret color="currentColor" /></PlainButton>
      <PlainButton aria-label="Pin panel"><Pin /></PlainButton>
    </TitleBar>
    <Toolbar>
      <PlainButton aria-label="Previous"><Arrow /></PlainButton>
      <PlainButton aria-label="Next"><Arrow rotate={180} color="#b9b9b9" /></PlainButton>
      <PlainButton aria-label="Move up"><Arrow rotate={90} /></PlainButton>
      <PlainButton aria-label="Move down"><Arrow rotate={270} /></PlainButton>
      <PlainButton aria-label="Show">
        <Svg>
          <path d="M1 3.500h1M4 3.500h11" stroke="#444" />
          <path d="M2 9q6-6 12 0-6 6-12 0z" fill={NAVY} />
          <circle cx="8" cy="9" r="2" fill="#8fbce6" />
          <circle cx="8" cy="9" r="1" fill={NAVY} />
        </Svg>
      </PlainButton>
      <PlainButton aria-label="Show menu"><Caret /></PlainButton>
      <PlainButton aria-label="Collapse all">
        <Svg>
          <path d="M1 2.500h1M3 2.500h8" stroke={NAVY} />
          <path d="M1 5.500h1M3 5.500h8M1 8.500h1M3 8.500h8M1 11.500h1M3 11.500h8M1 13.500h1M3 13.500h8" stroke="#999" />
          <path d="M13.500 12V4M11.500 6l2-3 2 3" stroke={NAVY} strokeWidth="1.300" />
        </Svg>
      </PlainButton>
      <PlainButton aria-label="Expand all">
        <Svg>
          <path d="M1 2.500h1M3 2.500h8M1 5.500h1M3 5.500h8M1 8.500h1M3 8.500h8M1 11.500h1M3 11.500h8M1 13.500h1M3 13.500h8" stroke={NAVY} />
          <path d="M13.500 4v8M11.500 10l2 3 2-3" stroke={NAVY} strokeWidth="1.300" />
        </Svg>
      </PlainButton>
      <PlainButton aria-label="Node text">
        <Svg>
          <path d="M3 2.500h7M3 5.500h7M3 8.500h7M3 11.500h7M3 13.500h7" stroke="#aaa" />
          <path d="M11 3h3M11 6h3M11 9h3M11 12h3" stroke={NAVY} strokeWidth="2" />
        </Svg>
      </PlainButton>
      <PlainButton aria-label="Node text menu"><Caret /></PlainButton>
    </Toolbar>
    <TreeFrame>
      <Tree items={modelItems} label="Model tree" />
      <HScroll>
        <PlainButton aria-label="Scroll left"><Svg size={8}><path d="M6 1v6L2 4z" fill="#777" /></Svg></PlainButton>
        <HThumb><Svg size={8}><path d="M.5 0v8M4 0v8M7.500 0v8" stroke="#333" /></Svg></HThumb>
        <span />
        <PlainButton aria-label="Scroll right"><Svg size={8}><path d="M2 1v6l4-3z" fill="#777" /></Svg></PlainButton>
      </HScroll>
    </TreeFrame>
  </Panel>
);

export default function App() {
  return (
    <>
      <GlobalStyle />
      <Page>
        <ModelBuilder />
        <SettingsPanel />
        <Column>
          <GraphicsPanel />
          <GraphicsFrame>
            <MessagesHead />
            <MessagesTools />
            <MessagesBody />
          </GraphicsFrame>
          <Inset />
        </Column>
        <Connectors aria-hidden="true" fill="none" strokeWidth="3">
          <path d="M181.500 353v26M181.500 364.500h327V58.500h304V94M626.500 58.500V73" stroke="#b97a57" />
          <path d="M214 337.500h246.500V611.500H490" stroke="#ed1c24" />
        </Connectors>
        <Callout $left={590} $top={72}>Input 1</Callout>
        <Callout $left={753} $top={93}>Output 1</Callout>
      </Page>
    </>
  );
}
